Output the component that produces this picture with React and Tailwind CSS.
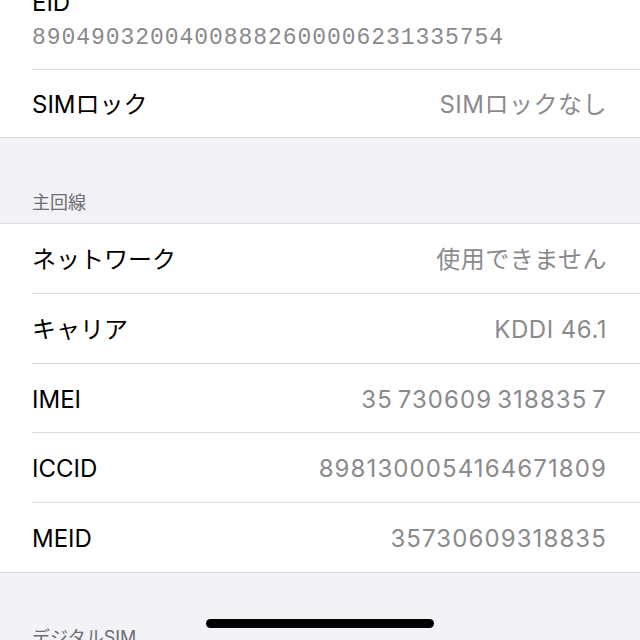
import React from "react";

const font = { fontFamily: 'Inter, "Noto Sans CJK JP", sans-serif' };

function Row({ label, value, digits, last, h, extra }) {
  return (
    <div className={"pl-[32px] " + h}>
      <div
        className={
          "h-full flex items-center justify-between pr-[33px] pt-[3px] " +
          (last ? "" : "border-b border-[#dcdce0]")
        }
      >
        <span className="text-[24px] leading-[28px] text-black">{label}</span>
        <span
          className={
            "text-[24px] leading-[28px] text-[#8a8a8e] " +
            (digits ? "tracking-[1.1px] " : "tracking-[0.5px] ") +
            (extra || "")
          }
        >
          {value}
        </span>
      </div>
    </div>
  );
}

export default function App() {
  return (
    <div
      className="w-[640px] h-[640px] overflow-hidden bg-[#f2f2f7] relative"
      style={font}
    >
      <div className="-mt-[11px] bg-white border-b border-[#dcdce0]">
        <div className="pl-[32px]">
          <div className="h-[81px] border-b border-[#dcdce0] flex flex-col">
            <span className="text-[24px] leading-[28px] text-black">EID</span>
            <span
              className="mt-[7px] text-[23px] leading-[28px] text-[#8a8a8e] tracking-[0.95px]"
              style={{ fontFamily: '"Liberation Mono", "DejaVu Sans Mono", monospace' }}
            >
              89049032004008882600006231335754
            </span>
          </div>
        </div>
        <div className="h-[67px] pl-[32px] flex items-center justify-between pr-[33px] pt-[3px]">
          <span className="text-[24px] leading-[28px] text-black">SIMロック</span>
          <span className="text-[24px] leading-[28px] text-[#8a8a8e] tracking-[0.5px]">SIMロックなし</span>
        </div>
      </div>

      <div className="h-[85px] flex items-end pl-[32px] pb-[9px]">
        <span className="text-[18px] leading-[22px] text-[#6d6d72]">主回線</span>
      </div>

      <div className="bg-white border-t border-b border-[#dcdce0]">
        <Row h="h-[70px]" label="ネットワーク" value="使用できません" />
        <Row h="h-[70px]" label="キャリア" value="KDDI 46.1" />
        <Row h="h-[69px]" label="IMEI" value="35 730609 318835 7" digits extra="[word-spacing:-3px]" />
        <Row h="h-[70px]" label="ICCID" value="8981300054164671809" digits />
        <Row h="h-[69px]" label="MEID" value="35730609318835" digits last />
      </div>

      <div className="h-[85px] flex items-end pl-[32px] pb-[9px]">
        <span className="text-[18px] leading-[22px] text-[#6d6d72]">デジタルSIM</span>
      </div>

      <div className="absolute left-[206px] top-[619px] w-[228px] h-[9px] rounded-full bg-black" />
    </div>
  );
}
